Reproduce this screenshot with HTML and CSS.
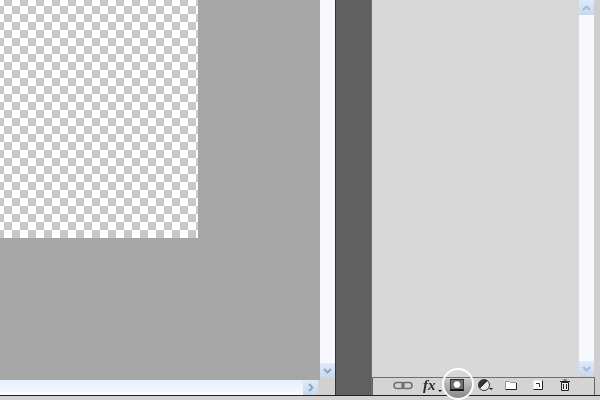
FILE: index.html
```html
<!DOCTYPE html>
<html lang="en">
<head>
    <meta charset="UTF-8">
    <title>Layers panel</title>
    <link rel="stylesheet" href="styles.css">
</head>
<body>
    <div class="app">
        <!-- Document window -->
        <div class="document">
            <div class="doc-main">
                <div class="canvas">
                    <div class="checker"></div>
                </div>
                <div class="vscroll vscroll-doc">
                    <div class="vscroll-track"></div>
                    <div class="scroll-btn">
                        <svg width="9" height="6" viewBox="0 0 9 6"><path d="M1 1l3.500 3.500L8 1" fill="none" stroke="#8ea3bd" stroke-width="2"/></svg>
                    </div>
                </div>
            </div>
            <div class="hscroll">
                <div class="hscroll-track"></div>
                <div class="scroll-btn">
                    <svg width="6" height="9" viewBox="0 0 6 9"><path d="M1 1l3.500 3.500L1 8" fill="none" stroke="#8ea3bd" stroke-width="2"/></svg>
                </div>
                <div class="scroll-corner"></div>
            </div>
        </div>

        <div class="dock"></div>

        <!-- Layers panel -->
        <div class="panel">
            <div class="panel-main">
                <div class="panel-body"></div>
                <div class="vscroll vscroll-panel">
                    <div class="scroll-btn">
                        <svg width="9" height="6" viewBox="0 0 9 6"><path d="M1 5l3.500-3.500L8 5" fill="none" stroke="#a9bbd0" stroke-width="2"/></svg>
                    </div>
                    <div class="vscroll-track"></div>
                    <div class="scroll-btn">
                        <svg width="9" height="6" viewBox="0 0 9 6"><path d="M1 1l3.500 3.500L8 1" fill="none" stroke="#a9bbd0" stroke-width="2"/></svg>
                    </div>
                </div>
            </div>
            <div class="panel-footer">
                <svg class="tool tool-link" width="20" height="9" viewBox="0 0 20 9">
                    <path d="M8 1.500H4a3 3 0 0 0 0 6h4a3 3 0 0 0 0-6zM12 1.500h4a3 3 0 0 1 0 6h-4a3 3 0 0 1 0-6z" fill="none" stroke="#6f6f72" stroke-width="1.500"/>
                </svg>
                <span class="tool tool-fx">fx<i class="caret"></i></span>
                <span class="tool tool-mask"><i class="ring"></i><i class="mask-icon"></i></span>
                <span class="tool tool-adjust"><i class="adjust-icon"></i><i class="caret"></i></span>
                <svg class="tool tool-folder" width="12" height="9" viewBox="0 0 12 9">
                    <path d="M.5 .5h4l1 1h6v7H.5z" fill="#fff"/>
                    <path d="M.5 8V.5h4l1 1h6" fill="none" stroke="#999"/>
                    <path d="M.5 8.500h11V2" fill="none" stroke="#222"/>
                </svg>
                <svg class="tool tool-new" width="10" height="10" viewBox="0 0 10 10">
                    <path d="M.5 .5h9v9h-9z" fill="#fff"/>
                    <path d="M9.500 .5v9h-9" fill="none" stroke="#222"/>
                    <path d="M3 3.500h3.500V7" fill="none" stroke="#333"/>
                </svg>
                <svg class="tool tool-trash" width="10" height="12" viewBox="0 0 10 12">
                    <path d="M1.500 3.500h7v8h-7z" fill="#eee" stroke="#222"/>
                    <path d="M0 2.500h10M3.500 1h3M3.500 5v5M6.500 5v5" stroke="#222" fill="none"/>
                </svg>
            </div>
        </div>
        <div class="window-edge"></div>
    </div>
</body>
</html>
```

FILE: styles.css
```css
* {
    margin: 0;
    padding: 0;
    box-sizing: border-box;
}

body {
    width: 600px;
    height: 400px;
    overflow: hidden;
    background: #d2d2d2;
    font-family: "Liberation Serif", serif;
}

.app {
    display: flex;
    height: 396px;
    border-bottom: 1px solid #222;
}

/* Document window */
.document {
    width: 336px;
    display: flex;
    flex-direction: column;
    border-right: 1px solid #333;
}

.doc-main {
    flex: 1;
    display: flex;
    min-height: 0;
    background: #d2d0d0;
}

.canvas {
    flex: 1;
    background: #a6a6a6;
}

.checker {
    width: 198px;
    height: 238px;
    background-color: #fff;
    background-image:
        linear-gradient(45deg, #c8c8c8 25%, transparent 25%, transparent 75%, #c8c8c8 75%),
        linear-gradient(45deg, #c8c8c8 25%, transparent 25%, transparent 75%, #c8c8c8 75%);
    background-size: 16px 16px;
    background-position: 12px -2px, 4px 6px;
}

.vscroll {
    width: 15px;
    display: flex;
    flex-direction: column;
    background: #f7f9ff;
}

.vscroll-doc {
    margin-bottom: 2px;
}

.vscroll-track {
    flex: 1;
}

.scroll-btn {
    width: 15px;
    height: 15px;
    flex: none;
    display: flex;
    align-items: center;
    justify-content: center;
    background: linear-gradient(#dfeafa, #c6d8f0);
}

.hscroll {
    height: 15px;
    display: flex;
    background: linear-gradient(#e3eefd, #f9fbff);
}

.hscroll-track {
    flex: 1;
}

.scroll-corner {
    width: 17px;
    background: #d2d0d0;
}

.dock {
    width: 36px;
    background: #606060;
    border-right: 1px solid #6e6e6e;
}

/* Layers panel */
.panel {
    width: 223px;
    display: flex;
    flex-direction: column;
}

.panel-main {
    flex: 1;
    display: flex;
    min-height: 0;
    padding-right: 1px;
    background: #cfcfcf;
}

.panel-body {
    flex: 1;
    background: #d8d8d8;
}

.vscroll-panel {
    margin-bottom: 1px;
}

.panel-footer {
    height: 18px;
    display: flex;
    align-items: center;
    background: #d4d4d4;
    border-top: 1px solid #6f6f6f;
    border-right: 1px solid #666;
    border-left: 1px solid #666;
    padding: 0 0 3px 20px;
}

.tool {
    flex: none;
    filter: blur(0.3px);
}

.tool-fx {
    margin-left: 10px;
    width: 16px;
    font-size: 15px;
    font-weight: bold;
    font-style: italic;
    line-height: 15px;
    color: #2c2c2c;
    position: relative;
}

.caret {
    position: absolute;
    right: -3px;
    bottom: 1px;
    border-left: 2px solid transparent;
    border-right: 2px solid transparent;
    border-top: 2px solid #111;
}

/* circled mask button */
.tool-mask {
    margin-left: 11px;
    width: 14px;
    height: 12px;
    position: relative;
}

.ring {
    position: absolute;
    left: -8px;
    top: -11px;
    width: 32px;
    height: 32px;
    border: 2px solid #fff;
    border-radius: 50%;
    background: linear-gradient(transparent 9px, #c6c6c6 9px, #8e8e8e 26px);
}

.mask-icon {
    display: block;
    position: relative;
    width: 14px;
    height: 12px;
    border: 1px solid #333;
    border-bottom: 2px solid #111;
    background: radial-gradient(circle, #fff 2.500px, #6e6e6e 4px);
}

.tool-adjust {
    margin-left: 14px;
    width: 12px;
    height: 12px;
    position: relative;
}

.adjust-icon {
    display: block;
    width: 12px;
    height: 12px;
    border-radius: 50%;
    border: 1px solid #333;
    background: linear-gradient(135deg, #333 50%, #eee 50%);
}

.tool-folder {
    margin-left: 15px;
}

.tool-new {
    margin-left: 16px;
}

.tool-trash {
    margin-left: 17px;
}

.window-edge {
    width: 5px;
    background: #cfcfcf;
}
```
